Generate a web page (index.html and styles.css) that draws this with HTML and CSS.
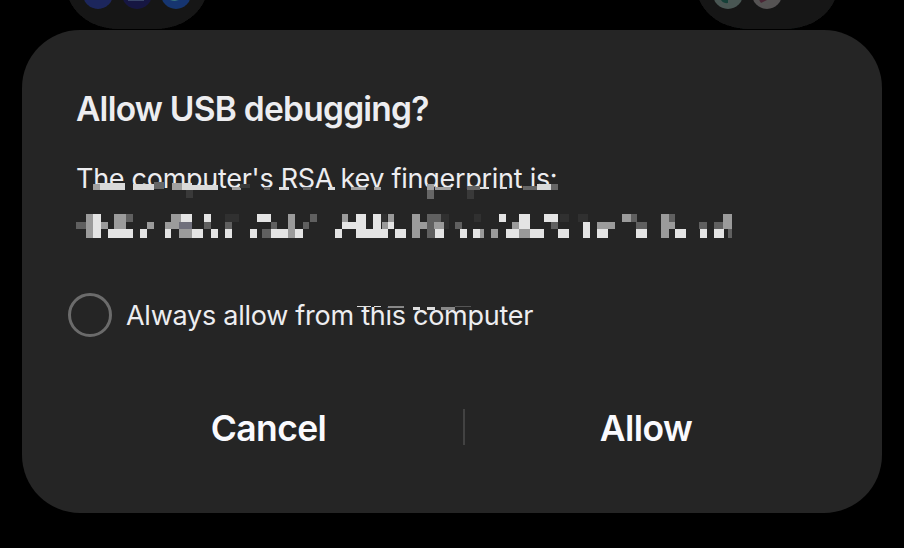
FILE: index.html
```html
<!DOCTYPE html>
<html lang="en">
<head>
<meta charset="utf-8">
<title>Allow USB debugging?</title>
<link rel="stylesheet" href="styles.css">
</head>
<body>
<div class="backdrop" aria-hidden="true">
<svg width="904" height="60" viewBox="0 0 904 60">
<defs><filter id="soft"><feGaussianBlur stdDeviation=".6"/></filter></defs>
<g filter="url(#soft)">
<rect x="66" y="-60" width="142" height="89" rx="52" fill="#191919"/>
<rect x="696" y="-60" width="142" height="89" rx="52" fill="#171818"/>
<circle cx="98" cy="-6" r="15" fill="#1c285c"/><circle cx="137" cy="-6" r="15" fill="#151443"/><circle cx="176" cy="-6" r="15" fill="#15366f"/>
<path d="M128 0h16" stroke="#394568" stroke-width="2"/><path d="M170 0q8 3 12-3" fill="#39747c"/>
<circle cx="728" cy="-6" r="15" fill="#4a5653"/><circle cx="767" cy="-6" r="15" fill="#555253"/>
<path d="M720-2l8 0v5q-6 1-8-5" fill="#174038"/><path d="M758-2h13l-10 5z" fill="#482634"/>
</g></svg>
</div>
<main class="dialog">
<h1 class="title">Allow USB debugging?</h1>
<section class="fingerprint">
<p class="message">The computer's RSA key fingerprint is:</p>
<svg class="mosaic" width="690" height="68" viewBox="70 180 690 68" shape-rendering="crispEdges" aria-hidden="true">
<path fill="#252525" d="M70 189h500v14H70z"/>
<path fill="#d9d9d9" d="M97 183h28v7H97zM133 184h21v6h-21zM178 183h14v7h-14zM192 185h26v5h-26zM537 184h14v6h-14z"/>
<path fill="#a0a0a0" d="M93 184h7v6h-7zM172 183h10v7h-10zM427 184h7v6h-7zM232 187h9v3h-9zM351 187h15v3h-15zM374 187h7v3h-7zM435 187h16v3h-16z"/>
<path fill="#666" d="M154 182h10v7h-10zM427 190h7v9h-7zM467 186h13v4h-13zM523 186h14v4h-14zM551 184h7v6h-7zM264 187h6v3h-6zM303 187h8v3h-8z"/>
<path fill="#393939" d="M186 190h7v8h-7zM467 190h7v9h-7zM240 184h10v4h-10z"/>
<path fill="#ddd" d="M279 187h10v3h-10zM328 187h7v3h-7zM480 187h9v2h-9zM500 187h7v2h-7z"/>
<path fill="#303030" d="M225 214h14v8h-14zM378 214h9v8h-9zM434 214h15v15h-15zM474 214h7v8h-7zM560 214h9v8h-9zM578 214h10v8h-10z"/>
<path fill="#606060" d="M76 222h10v7H76zM126 214h7v8h-7zM204 222h7v7h-7zM225 222h7v7h-7zM310 214h7v8h-7zM262 229h9v9h-9zM271 222h6v7h-6zM303 222h6v7h-6zM427 214h14v24h-14zM455 222h7v7h-7zM551 222h7v7h-7zM631 214h6v8h-6zM636 222h11v7h-11zM668 214h7v8h-7zM699 222h8v7h-8zM714 222h11v7h-11zM728 229h4v9h-4z"/>
<path fill="#9b9b9b" d="M86 214h7v24h-7zM101 222h7v7h-7zM114 214h12v15h-12zM147 222h7v7h-7zM171 214h10v8h-10zM165 222h14v7h-14zM179 229h13v9h-13zM288 214h7v24h-7zM342 214h6v8h-6zM412 214h8v24h-8zM420 222h7v7h-7zM434 222h10v7h-10zM491 229h7v9h-7zM512 222h7v7h-7zM597 222h18v7h-18zM622 214h9v8h-9zM661 214h8v24h-8zM668 222h7v7h-7zM723 214h9v15h-9z"/>
<path fill="#e4e4e4" d="M93 214h8v24h-8zM108 229h25v9h-25zM140 229h7v9h-7zM165 229h6v9h-6zM181 214h11v8h-11zM192 229h11v9h-11zM204 214h7v8h-7zM211 229h7v9h-7zM225 229h7v9h-7zM257 214h14v8h-14zM250 229h7v9h-7zM271 229h17v9h-17zM295 229h8v9h-8zM335 229h7v9h-7zM342 222h14v7h-14zM356 214h10v24h-10zM366 229h7v9h-7zM373 214h8v24h-8zM381 229h7v9h-7zM388 222h6v7h-6zM395 229h11v9h-11zM435 229h9v9h-9zM460 229h7v9h-7zM473 229h7v9h-7zM499 214h7v8h-7zM506 229h13v9h-13zM519 214h11v15h-11zM530 229h14v9h-14zM544 214h14v8h-14zM558 229h11v9h-11zM583 222h7v16h-7zM597 229h11v9h-11zM636 229h11v9h-11zM675 229h11v9h-11zM700 229h7v9h-7zM714 229h10v9h-10z"/>
<path fill="#70707c" d="M179 222h13v7h-13z"/>
<path fill="#999" d="M480 229h4v9h-4zM382 222h6v7h-6zM388 214h6v8h-6zM519 229h11v9h-11z"/>
</svg>
</section>
<label class="option"><input class="check" type="checkbox"><span class="option-text">Always allow from this computer</span>
<svg class="option-mosaic" width="120" height="10" viewBox="356 300 120 10" aria-hidden="true"><path fill="#252525" d="M356 300h120v7H356z"/><path fill="#ddd" d="M357 306h14v1h-14zM374 306h7v1h-7zM413 307h7v3h-7zM427 307h8v3h-8z"/><path fill="#888" d="M388 306h16v2h-16zM441 307h14v3h-14z"/><path fill="#555" d="M455 306h16v1h-16z"/></svg>
</label>
<div class="actions"><button class="cancel">Cancel</button><i class="divider"></i><button class="allow">Allow</button></div>
</main>
</body>
</html>
```
FILE: styles.css
```css
* { box-sizing: border-box; }
body { margin: 0; width: 904px; height: 548px; overflow: hidden; background: #000; color: #ededf0; font-family: Inter, "Noto Sans", sans-serif; padding: 30px 22px 35px; }
.backdrop { position: absolute; top: 0; left: 0; height: 60px; }
.dialog { position: relative; width: 860px; height: 483px; background: #252525; border-radius: 58px; padding: 56px 46px 0; }
.title { margin: 0 0 0 8px; height: 46px; line-height: 46px; font-size: 33.5px; font-weight: 600; letter-spacing: -.75px; white-space: nowrap; }
.fingerprint { position: relative; height: 161px; padding: 29px 0 0 8px; }
.message { margin: 0; line-height: 36px; font-size: 27px; font-weight: 400; letter-spacing: -.28px; white-space: nowrap; }
.mosaic { position: absolute; left: 2px; top: 48px; }
.option { position: relative; height: 44px; display: flex; align-items: center; gap: 14px; }
.check { appearance: none; width: 44px; height: 44px; margin: 0; border: 3px solid #6b6b6b; border-radius: 50%; }
.option-text { padding-top: 2px; font-size: 27px; line-height: 44px; letter-spacing: -.26px; white-space: nowrap; }
.option-mosaic { position: absolute; left: 288px; top: 7px; }
.actions { margin: 64px 0 0; height: 56px; display: flex; align-items: center; }
.actions button { border: 0; padding: 0; background: none; color: #fafafe; font: 600 35.5px/56px Inter, sans-serif; letter-spacing: -.6px; text-align: center; }
.actions .cancel { width: 395px; padding-left: 6px; }
.actions .allow { flex: 1; padding-right: 9px; }
.divider { width: 2px; height: 36px; background: #424242; margin-top: -5px; }
```
